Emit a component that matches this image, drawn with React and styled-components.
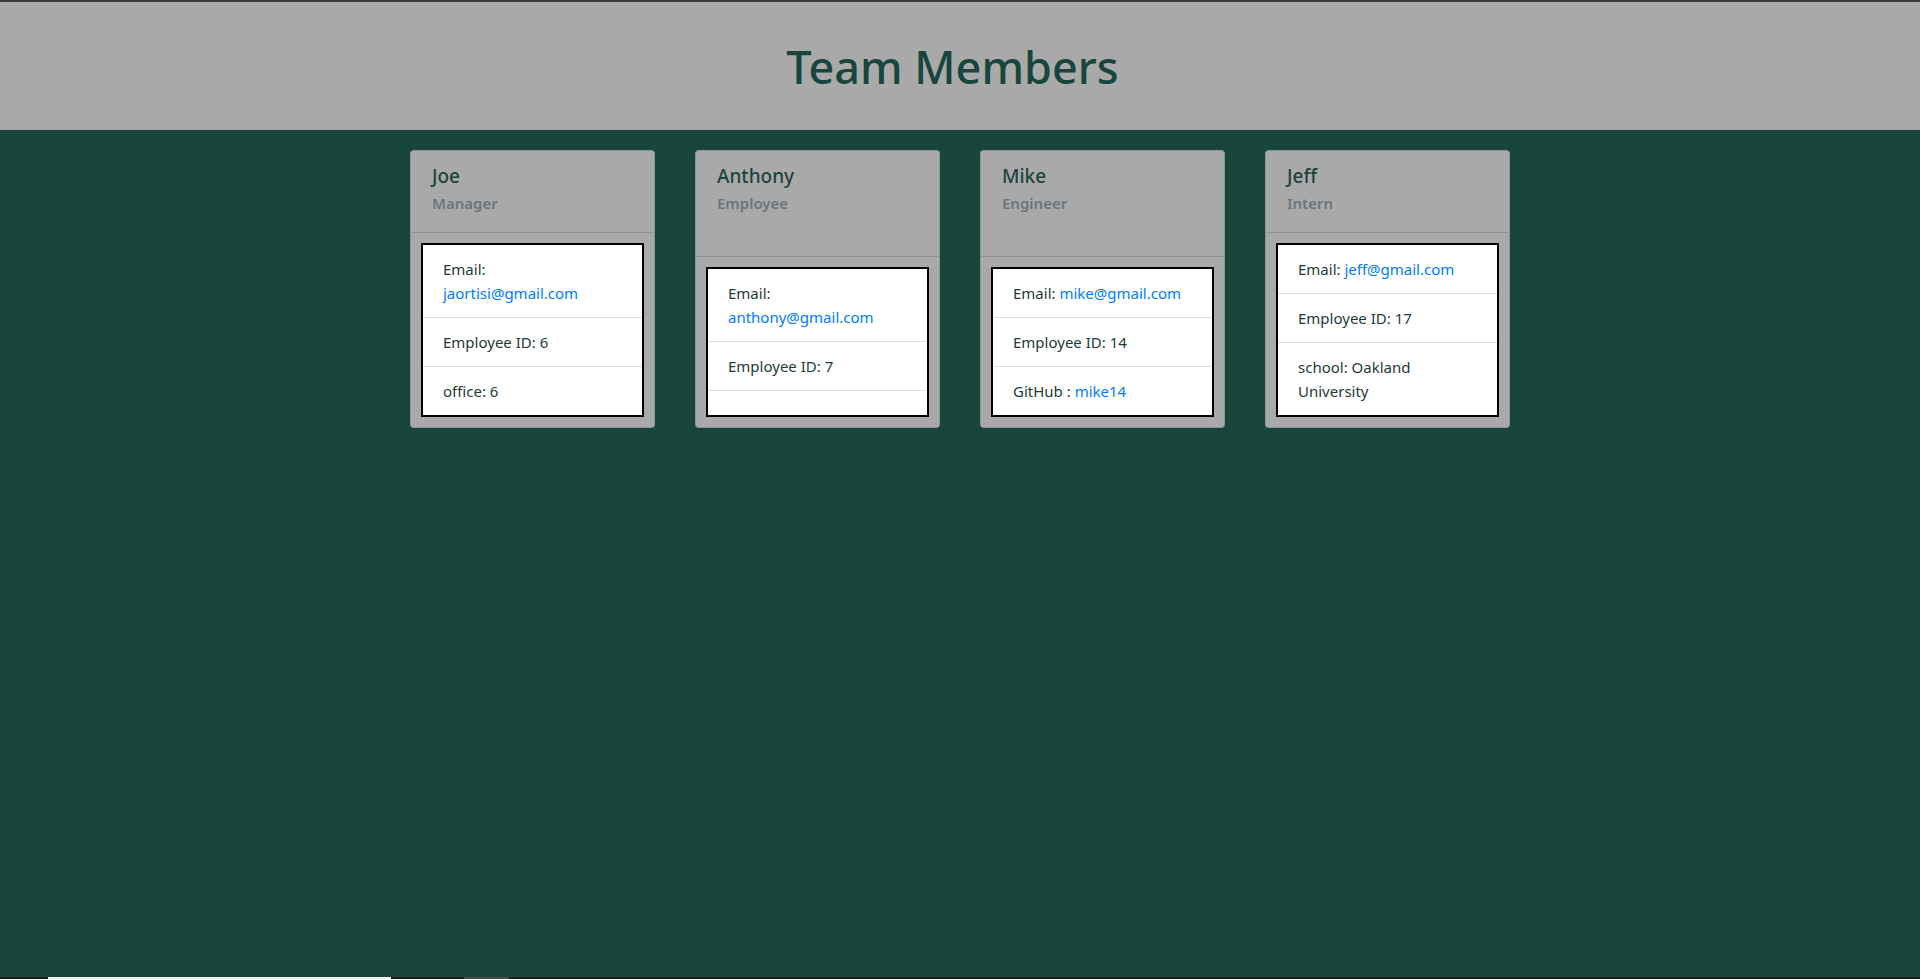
import React from "react";
import styled, { createGlobalStyle } from "styled-components";

const GlobalStyle = createGlobalStyle`
  * {
    box-sizing: border-box;
  }
  body {
    margin: 0;
    background-color: #18453c;
    font-family: "Noto Sans", "Open Sans", sans-serif;
    color: #212529;
  }
`;

const Page = styled.div`
  min-height: 100vh;
  display: flex;
  flex-direction: column;
  border-top: 2px solid #3a3a3a;
`;

const Header = styled.header`
  height: 128px;
  background-color: #a9a9a9;
  display: flex;
  align-items: center;
  justify-content: center;
  padding-right: 15px;
`;

const Title = styled.h1`
  margin: 0;
  font-size: 45px;
  font-weight: 500;
  color: #18453c;
`;

const Main = styled.main`
  flex: 1;
  display: flex;
  justify-content: center;
  align-items: flex-start;
  padding-top: 20px;
`;

const Row = styled.div`
  display: flex;
  gap: 40px;
`;

const Card = styled.div`
  width: 245px;
  display: flex;
  flex-direction: column;
  background-color: #a9a9a9;
  border: 1px solid rgba(0, 0, 0, 0.125);
  border-radius: 4px;
`;

const CardHeader = styled.div`
  flex: 1 1 auto;
  padding: 13px 21px 19px;
  border-bottom: 1px solid rgba(0, 0, 0, 0.125);
`;

const Name = styled.h5`
  margin: 0 0 6px;
  font-size: 19px;
  font-weight: 500;
  line-height: 24px;
  color: #1d433d;
`;

const Role = styled.h6`
  margin: 0;
  font-size: 15px;
  font-weight: 600;
  line-height: 19px;
  color: #6c757d;
`;

const InfoList = styled.ul`
  margin: 10px;
  padding: 0;
  list-style: none;
  background-color: #fff;
  border: 2px solid #000;
`;

const InfoItem = styled.li`
  min-height: 24px;
  padding: 12px 20px;
  font-size: 15px;
  line-height: 24px;
  color: #1d3b37;

  & + & {
    border-top: 1px solid #dcdcdc;
  }
`;

const Link = styled.a`
  color: #007bff;
  text-decoration: none;
`;

const Footer = styled.div`
  height: 2px;
  display: flex;
  background-color: #1c1c1c;
`;

const Track = styled.div`
  margin-left: ${(p) => p.$offset}px;
  width: ${(p) => p.$width}px;
  background-color: ${(p) => p.$color};
`;

const members = [
  {
    name: "Joe",
    role: "Manager",
    email: "jaortisi@gmail.com",
    id: 6,
    extra: <>office: 6</>,
  },
  {
    name: "Anthony",
    role: "Employee",
    email: "anthony@gmail.com",
    id: 7,
    extra: null,
  },
  {
    name: "Mike",
    role: "Engineer",
    email: "mike@gmail.com",
    id: 14,
    extra: (
      <>
        GitHub : <Link href="#">mike14</Link>
      </>
    ),
  },
  {
    name: "Jeff",
    role: "Intern",
    email: "jeff@gmail.com",
    id: 17,
    extra: <>school: Oakland University</>,
  },
];

const App = () => {
  return (
    <Page>
      <GlobalStyle />
      <Header>
        <Title>Team Members</Title>
      </Header>
      <Main>
        <Row>
          {members.map((m) => (
            <Card key={m.name}>
              <CardHeader>
                <Name>{m.name}</Name>
                <Role>{m.role}</Role>
              </CardHeader>
              <InfoList>
                <InfoItem>
                  Email: <Link href="#">{m.email}</Link>
                </InfoItem>
                <InfoItem>Employee ID: {m.id}</InfoItem>
                <InfoItem>{m.extra}</InfoItem>
              </InfoList>
            </Card>
          ))}
        </Row>
      </Main>
      <Footer>
        <Track $offset={48} $width={343} $color="#f0f0f0" />
        <Track $offset={73} $width={45} $color="#4a4a4a" />
      </Footer>
    </Page>
  );
};

export default App;
